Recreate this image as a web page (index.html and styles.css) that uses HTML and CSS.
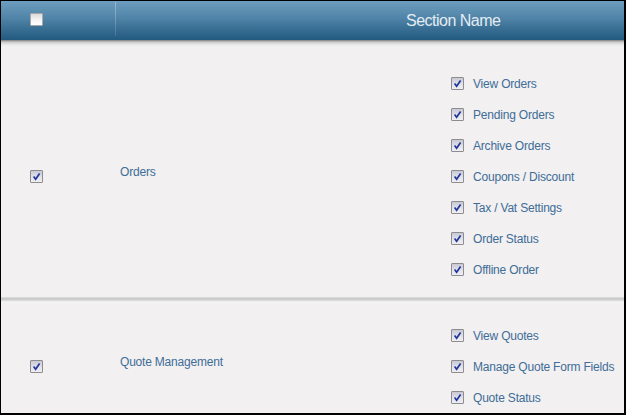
FILE: index.html
```html
<!DOCTYPE html>
<html lang="en">
<head>
    <meta charset="UTF-8">
    <title>Section Permissions</title>
    <link rel="stylesheet" href="styles.css">
</head>
<body>
    <div class="frame">
        <div class="grid-head">
            <div class="head-check"><span class="cb"></span></div>
            <div class="head-title">Section Name</div>
        </div>
        <div class="head-shadow"></div>

        <div class="section section-first">
            <div class="sec-check"><span class="cb checked"><svg viewBox="0 0 11 11"><path d="M2.6 5.6 L4.6 8.2 L8.6 2.4"/></svg></span></div>
            <div class="sec-name">Orders</div>
            <ul class="perms">
                <li><span class="cb checked"><svg viewBox="0 0 11 11"><path d="M2.6 5.6 L4.6 8.2 L8.6 2.4"/></svg></span>View Orders</li>
                <li><span class="cb checked"><svg viewBox="0 0 11 11"><path d="M2.6 5.6 L4.6 8.2 L8.6 2.4"/></svg></span>Pending Orders</li>
                <li><span class="cb checked"><svg viewBox="0 0 11 11"><path d="M2.6 5.6 L4.6 8.2 L8.6 2.4"/></svg></span>Archive Orders</li>
                <li><span class="cb checked"><svg viewBox="0 0 11 11"><path d="M2.6 5.6 L4.6 8.2 L8.6 2.4"/></svg></span>Coupons / Discount</li>
                <li><span class="cb checked"><svg viewBox="0 0 11 11"><path d="M2.6 5.6 L4.6 8.2 L8.6 2.4"/></svg></span>Tax / Vat Settings</li>
                <li><span class="cb checked"><svg viewBox="0 0 11 11"><path d="M2.6 5.6 L4.6 8.2 L8.6 2.4"/></svg></span>Order Status</li>
                <li><span class="cb checked"><svg viewBox="0 0 11 11"><path d="M2.6 5.6 L4.6 8.2 L8.6 2.4"/></svg></span>Offline Order</li>
            </ul>
        </div>

        <div class="divider"></div>

        <div class="section">
            <div class="sec-check"><span class="cb checked"><svg viewBox="0 0 11 11"><path d="M2.6 5.6 L4.6 8.2 L8.6 2.4"/></svg></span></div>
            <div class="sec-name">Quote Management</div>
            <ul class="perms">
                <li><span class="cb checked"><svg viewBox="0 0 11 11"><path d="M2.6 5.6 L4.6 8.2 L8.6 2.4"/></svg></span>View Quotes</li>
                <li><span class="cb checked"><svg viewBox="0 0 11 11"><path d="M2.6 5.6 L4.6 8.2 L8.6 2.4"/></svg></span>Manage Quote Form Fields</li>
                <li><span class="cb checked"><svg viewBox="0 0 11 11"><path d="M2.6 5.6 L4.6 8.2 L8.6 2.4"/></svg></span>Quote Status</li>
            </ul>
        </div>
    </div>
</body>
</html>
```

FILE: styles.css
```css
body {
    margin: 0;
    padding: 0;
    font-family: "Liberation Sans", Arial, sans-serif;
    background-color: #f2f0f1;
}

.frame {
    width: 626px;
    height: 415px;
    box-sizing: border-box;
    border: 1px solid #000;
    border-right-width: 2px;
    border-bottom-width: 2px;
    background-color: #f2f0f1;
    overflow: hidden;
}

/* header bar */
.grid-head {
    display: flex;
    height: 39px;
    background: linear-gradient(#6e9ebe, #4f83a7 45%, #22597f);
}

.head-check {
    position: relative;
    width: 114px;
    padding: 11px 0 0 29px;
    box-sizing: border-box;
}

.head-check::after {
    content: "";
    position: absolute;
    right: -1px;
    top: 1px;
    bottom: 4px;
    width: 1px;
    background: linear-gradient(rgba(255, 255, 255, 0.3), rgba(255, 255, 255, 0.12));
}

.head-title {
    padding-left: 291px;
    line-height: 39px;
    font-size: 16px;
    letter-spacing: -0.5px;
    color: #e4ecf3;
}

.head-shadow {
    height: 8px;
    background: linear-gradient(#7c7c7c, #c9c9c9 2px, #ececec 5px, #f4f3f3);
}

/* sections */
.section {
    display: flex;
    align-items: center;
    padding: 17px 0 12px;
}

.section-first {
    padding-top: 20px;
}

.sec-check {
    width: 114px;
    padding-left: 29px;
    box-sizing: border-box;
    display: flex;
}

.sec-name {
    width: 335px;
    padding-left: 5px;
    box-sizing: border-box;
    margin-bottom: 10px;
    font-size: 12px;
    letter-spacing: -0.2px;
    color: #3e6d97;
}

.perms {
    list-style: none;
    margin: 0;
    padding: 0 0 0 1px;
}

.perms li {
    display: flex;
    align-items: center;
    height: 31px;
    font-size: 12px;
    letter-spacing: -0.2px;
    color: #3e6d97;
}

.perms .cb {
    margin-right: 9px;
}

.divider {
    height: 6px;
    background: linear-gradient(#e2e0e0, #c3c3c3 2px, #d6d6d6 3px, #f2f2f2 5px, #f8f8f8);
}

/* checkbox */
.cb {
    display: inline-block;
    width: 13px;
    height: 13px;
    box-sizing: border-box;
    border: 1px solid #a9a9a9;
    border-radius: 1px;
    background: linear-gradient(#dcdcdc, #f7f7f7 60%, #ffffff);
    flex-shrink: 0;
}

.cb.checked {
    border-color: #8d8d8f;
    background: linear-gradient(#c8c9d4, #e4e4ec 60%, #eeeef3);
}

.cb svg {
    display: block;
    width: 11px;
    height: 11px;
}

.cb path {
    fill: none;
    stroke: #22369c;
    stroke-width: 1.7;
}
```
